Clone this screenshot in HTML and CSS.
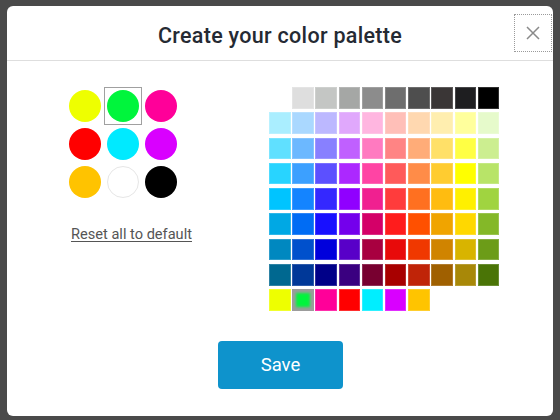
FILE: index.html
```html
<!DOCTYPE html>
<html lang="en">
<head>
<meta charset="utf-8">
<title>Create your color palette</title>
<link rel="stylesheet" href="styles.css">
</head>
<body>
<div class="modal">
  <div class="modal-header">
    <h1 class="modal-title">Create your color palette</h1>
    <button class="close-btn" aria-label="Close">
      <svg width="14" height="14" viewBox="0 0 14 14"><path d="M1 1 L13 13 M13 1 L1 13" stroke="#8a8a8a" stroke-width="1.5" fill="none"/></svg>
    </button>
  </div>
  <div class="modal-body">
    <div class="left-col">
      <div class="circles">
        <div class="circle-cell"><span class="circle" style="background:#eeff00"></span></div>
        <div class="circle-cell selected"><span class="circle" style="background:#00f53c"></span></div>
        <div class="circle-cell"><span class="circle" style="background:#ff0099"></span></div>
        <div class="circle-cell"><span class="circle" style="background:#ff0000"></span></div>
        <div class="circle-cell"><span class="circle" style="background:#00eaff"></span></div>
        <div class="circle-cell"><span class="circle" style="background:#d900ff"></span></div>
        <div class="circle-cell"><span class="circle" style="background:#ffc300"></span></div>
        <div class="circle-cell"><span class="circle circle-white" style="background:#ffffff"></span></div>
        <div class="circle-cell"><span class="circle" style="background:#000000"></span></div>
      </div>
      <a class="reset-link" href="#">Reset all to default</a>
    </div>
    <div class="swatches">
      <span class="sw" style="background:#ffffff"></span>
      <span class="sw" style="background:#dedede"></span>
      <span class="sw" style="background:#c4c6c4"></span>
      <span class="sw" style="background:#a5a7a5"></span>
      <span class="sw" style="background:#8c8c8c"></span>
      <span class="sw" style="background:#6e6e6e"></span>
      <span class="sw" style="background:#4e4e4e"></span>
      <span class="sw" style="background:#3a3636"></span>
      <span class="sw" style="background:#1e1e20"></span>
      <span class="sw" style="background:#000000"></span>

      <span class="sw" style="background:#aaeeff"></span>
      <span class="sw" style="background:#aad8ff"></span>
      <span class="sw" style="background:#bcb8ff"></span>
      <span class="sw" style="background:#e0a8fc"></span>
      <span class="sw" style="background:#ffb6e0"></span>
      <span class="sw" style="background:#ffbfb8"></span>
      <span class="sw" style="background:#ffd8b0"></span>
      <span class="sw" style="background:#ffeeaf"></span>
      <span class="sw" style="background:#ffff9c"></span>
      <span class="sw" style="background:#e6facb"></span>

      <span class="sw" style="background:#60e0ff"></span>
      <span class="sw" style="background:#6cb8ff"></span>
      <span class="sw" style="background:#8880ff"></span>
      <span class="sw" style="background:#c060ff"></span>
      <span class="sw" style="background:#ff7ac0"></span>
      <span class="sw" style="background:#ff8484"></span>
      <span class="sw" style="background:#ffac78"></span>
      <span class="sw" style="background:#ffe068"></span>
      <span class="sw" style="background:#ffff44"></span>
      <span class="sw" style="background:#ccee90"></span>

      <span class="sw" style="background:#28d4ff"></span>
      <span class="sw" style="background:#3ca0ff"></span>
      <span class="sw" style="background:#5c50ff"></span>
      <span class="sw" style="background:#ac28ff"></span>
      <span class="sw" style="background:#ff44a4"></span>
      <span class="sw" style="background:#ff5a5a"></span>
      <span class="sw" style="background:#ff8c48"></span>
      <span class="sw" style="background:#ffcc30"></span>
      <span class="sw" style="background:#ffff00"></span>
      <span class="sw" style="background:#b8e468"></span>

      <span class="sw" style="background:#00c4ff"></span>
      <span class="sw" style="background:#1484ff"></span>
      <span class="sw" style="background:#3428ff"></span>
      <span class="sw" style="background:#9000ff"></span>
      <span class="sw" style="background:#f02090"></span>
      <span class="sw" style="background:#ff3c3c"></span>
      <span class="sw" style="background:#ff7020"></span>
      <span class="sw" style="background:#ffbc10"></span>
      <span class="sw" style="background:#fff000"></span>
      <span class="sw" style="background:#a0d440"></span>

      <span class="sw" style="background:#00a8e4"></span>
      <span class="sw" style="background:#006cf4"></span>
      <span class="sw" style="background:#1810ff"></span>
      <span class="sw" style="background:#7400ec"></span>
      <span class="sw" style="background:#d40068"></span>
      <span class="sw" style="background:#ff1c1c"></span>
      <span class="sw" style="background:#ff5000"></span>
      <span class="sw" style="background:#f0a400"></span>
      <span class="sw" style="background:#ffd800"></span>
      <span class="sw" style="background:#84b828"></span>

      <span class="sw" style="background:#0088c0"></span>
      <span class="sw" style="background:#0050cc"></span>
      <span class="sw" style="background:#0000dc"></span>
      <span class="sw" style="background:#5800c8"></span>
      <span class="sw" style="background:#a80040"></span>
      <span class="sw" style="background:#e80a0a"></span>
      <span class="sw" style="background:#f03800"></span>
      <span class="sw" style="background:#d08400"></span>
      <span class="sw" style="background:#d8b400"></span>
      <span class="sw" style="background:#6c9c18"></span>

      <span class="sw" style="background:#006890"></span>
      <span class="sw" style="background:#003898"></span>
      <span class="sw" style="background:#000088"></span>
      <span class="sw" style="background:#3a0080"></span>
      <span class="sw" style="background:#780030"></span>
      <span class="sw" style="background:#a80000"></span>
      <span class="sw" style="background:#c02408"></span>
      <span class="sw" style="background:#a06000"></span>
      <span class="sw" style="background:#a88808"></span>
      <span class="sw" style="background:#4a7406"></span>

      <span class="sw" style="background:#eeff00"></span>
      <span class="sw sw-selected" style="background:#00f53c"></span>
      <span class="sw" style="background:#ff0099"></span>
      <span class="sw" style="background:#ff0000"></span>
      <span class="sw" style="background:#00eeff"></span>
      <span class="sw" style="background:#d900ff"></span>
      <span class="sw" style="background:#ffc400"></span>
    </div>
  </div>
  <div class="modal-footer">
    <button class="save-btn">Save</button>
  </div>
</div>
</body>
</html>
```
FILE: styles.css
```css
* { box-sizing: border-box; }

html, body {
  margin: 0;
  height: 100%;
}

body {
  background: #4a4a4a;
  padding: 6px 7px 0 7px;
  font-family: Roboto, "Liberation Sans", Arial, sans-serif;
  overflow: hidden;
}

.modal {
  width: 546px;
  height: 410px;
  background: #ffffff;
  border-radius: 6px;
  overflow: hidden;
}

.modal-header {
  position: relative;
  height: 55px;
  border-bottom: 1px solid #dedede;
  display: flex;
  align-items: center;
  justify-content: center;
}

.modal-title {
  margin: 0;
  font-size: 21.5px;
  font-weight: 500;
  color: #252a33;
  letter-spacing: 0.3px;
  padding-top: 4px;
}

.close-btn {
  position: absolute;
  top: 8px;
  right: 1px;
  width: 38px;
  height: 38px;
  border: 1px dotted #9a9a9a;
  background: #ffffff;
  padding: 0;
  display: flex;
  align-items: center;
  justify-content: center;
}

.modal-body {
  display: flex;
  padding: 26px 0 0 59px;
}

.left-col {
  width: 203px;
  display: flex;
  flex-direction: column;
}

.circles {
  display: grid;
  grid-template-columns: repeat(3, 38px);
  grid-auto-rows: 38px;
}

.circle-cell {
  border: 1px solid transparent;
  padding: 2px;
}

.circle-cell.selected {
  border-color: #a0a0a0;
}

.circle {
  display: block;
  width: 32px;
  height: 32px;
  border-radius: 50%;
}

.circle-white {
  border: 1px solid #e6e6e6;
}

.reset-link {
  margin-top: 25px;
  padding-left: 5px;
  font-size: 14.6px;
  line-height: 16px;
  color: #555555;
  text-decoration: underline;
  text-underline-offset: 2px;
}

.swatches {
  display: grid;
  grid-template-columns: repeat(10, 21.5px);
  grid-auto-rows: 21.5px;
  column-gap: 1.7px;
  row-gap: 3.8px;
}

.sw {
  display: block;
  box-shadow: inset 0 0 0 1px rgba(255, 255, 255, 0.18);
}

.sw-selected {
  box-shadow: inset 0 0 3px 4px #9c9c9c;
}

.modal-footer {
  display: flex;
  justify-content: center;
  padding-top: 30px;
  padding-left: 1px;
}

.save-btn {
  width: 125px;
  height: 48px;
  border: none;
  border-radius: 4px;
  background: #0e93cc;
  color: #ffffff;
  font-family: Roboto, "Liberation Sans", Arial, sans-serif;
  font-size: 18.5px;
  font-weight: 400;
}
```
